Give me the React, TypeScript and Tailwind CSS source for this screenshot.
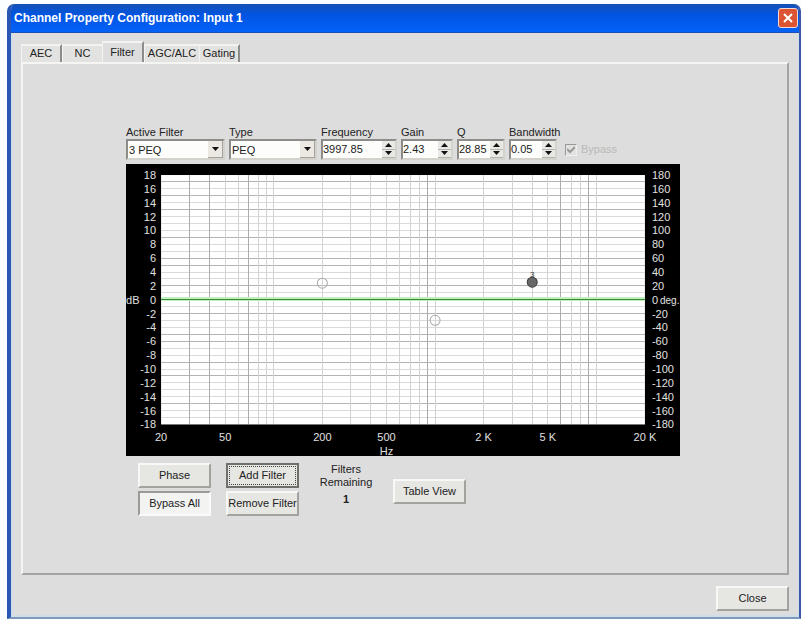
import React, { useState } from "react";

const TABS = ["AEC", "NC", "Filter", "AGC/ALC", "Gating"];

const TAB_WIDTHS: Record<string, string> = {
	AEC: "w-[41px]",
	NC: "w-[40px]",
	Filter: "w-[42px]",
	"AGC/ALC": "w-[55px]",
	Gating: "w-[41px]",
};

// Plot area inside the 553x291 chart
const PLOT = { left: 35, top: 11, right: 518, bottom: 260 };
const MIN_FREQ = 20;
const DECADES = 3;

const freqToX = (freq: number) => PLOT.left + (Math.log10(freq / MIN_FREQ) / DECADES) * (PLOT.right - PLOT.left);
const gainToY = (gain: number) => PLOT.top + ((18 - gain) / 36) * (PLOT.bottom - PLOT.top);

const FREQ_LINES = [
	30, 40, 50, 60, 70, 80, 90, 100, 200, 300, 400, 500, 600, 700, 800, 900, 1000, 2000, 3000, 4000, 5000, 6000, 7000,
	8000, 9000, 10000,
];
const DARK_LINES = [30, 40, 70, 900, 6000, 9000];
const DARK_GAINS = [17, 15, 13, 9, 6, 5, 2, -2, -5, -6, -9, -11, -15];
const GAIN_LINES = Array.from({ length: 35 }, (_, i) => 17 - i);
const AXIS_STEPS = Array.from({ length: 19 }, (_, i) => 18 - i * 2);
const FREQ_LABELS = [
	{ freq: 20, label: "20" },
	{ freq: 50, label: "50" },
	{ freq: 200, label: "200" },
	{ freq: 500, label: "500" },
	{ freq: 2000, label: "2 K" },
	{ freq: 5000, label: "5 K" },
	{ freq: 20000, label: "20 K" },
];

const FilterChart = () => (
	<svg viewBox="0 0 553 291" className="block w-full bg-black" role="img" aria-label="Filter response">
		<rect x={PLOT.left} y={PLOT.top} width={PLOT.right - PLOT.left} height={PLOT.bottom - PLOT.top} fill="#fff" />
		<g shapeRendering="crispEdges">
			{GAIN_LINES.map((gain) => (
				<line
					key={gain}
					x1={PLOT.left}
					x2={PLOT.right}
					y1={gainToY(gain)}
					y2={gainToY(gain)}
					stroke={DARK_GAINS.includes(gain) ? "#b4b4b4" : "#dadada"}
				/>
			))}
			{FREQ_LINES.map((freq) => (
				<line
					key={freq}
					x1={freqToX(freq)}
					x2={freqToX(freq)}
					y1={PLOT.top}
					y2={PLOT.bottom}
					stroke={DARK_LINES.includes(freq) ? "#acacac" : "#d2d2d2"}
				/>
			))}
			<rect x={PLOT.left} y="133" width={PLOT.right - PLOT.left} height="4" fill="#c4f0c0" />
			<rect x={PLOT.left} y="135" width={PLOT.right - PLOT.left} height="1" fill="#37883a" />
		</g>
		<circle cx={freqToX(200)} cy="119" r="5" fill="none" stroke="#a9a9a9" />
		<circle cx={freqToX(1000)} cy="156" r="5" fill="none" stroke="#a9a9a9" />
		<circle cx={freqToX(4000)} cy="118" r="5" fill="#686868" stroke="#3c3c3c" />
		<text x={freqToX(4000)} y="113" fontSize="8" textAnchor="middle" fill="#333">
			3
		</text>
		<g fill="#e0e0e0" fontSize="11">
			{AXIS_STEPS.map((step) => (
				<React.Fragment key={step}>
					<text x="30" y={gainToY(step) + 4} textAnchor="end">
						{step}
					</text>
					<text x="525" y={gainToY(step) + 4}>
						{step === 0 ? "0" : step * 10}
					</text>
				</React.Fragment>
			))}
			<text x="0" y="140">
				dB
			</text>
			<text x="533" y="140" fontSize="10">
				deg.
			</text>
			{FREQ_LABELS.map(({ freq, label }) => (
				<text key={freq} x={freqToX(freq)} y="277" textAnchor="middle">
					{label}
				</text>
			))}
			<text x="260" y="290" textAnchor="middle">
				Hz
			</text>
		</g>
	</svg>
);

const sunken = "border-2 border-t-[#8d8c88] border-l-[#8d8c88] border-r-[#d3d2cd] border-b-[#d3d2cd] bg-[#fdfdfb]";
const raised = "border-2 border-t-[#f8f8f6] border-l-[#f8f8f6] border-r-[#a3a29e] border-b-[#a3a29e] bg-[#e6e6e3]";

const SelectField = ({ id, label, value, width }: { id: string; label: string; value: string; width: string }) => (
	<div className={width}>
		<label htmlFor={id} className="block h-[12px] leading-[12px] whitespace-nowrap">
			{label}
		</label>
		<div className={`relative mt-px h-[21px] ${sunken}`}>
			<select id={id} defaultValue={value} className="block w-full h-full pl-px appearance-none bg-transparent text-[11px] leading-[16px] outline-none">
				<option>{value}</option>
			</select>
			<span className="absolute right-0 top-0 bottom-0 w-[15px] flex items-center justify-center border-r border-b border-[#a3a29e] bg-[#ebe9e2] pointer-events-none">
				<svg width="7" height="4" viewBox="0 0 7 4">
					<path d="M0 0h7L3.5 4z" fill="#111" />
				</svg>
			</span>
		</div>
	</div>
);

const SpinField = ({ id, label, value, width }: { id: string; label: string; value: string; width: string }) => {
	const [text, setText] = useState(value);
	const step = (delta: number) => setText((Number(text) + delta).toFixed(2));

	return (
		<div className={width}>
			<label htmlFor={id} className="block h-[12px] leading-[12px] whitespace-nowrap">
				{label}
			</label>
			<div className={`flex mt-px h-[21px] ${sunken}`}>
				<input
					id={id}
					value={text}
					onChange={(e) => setText(e.target.value)}
					className="min-w-0 flex-1 h-[16px] bg-transparent text-[11px] leading-[16px] outline-none"
				/>
				<span className="w-[13px] flex flex-col bg-[#e8e8e5]">
					<button aria-label={`${label} up`} onClick={() => step(0.01)} className="flex-1 flex items-center justify-center border-b border-[#b5b4b0]">
						<svg width="7" height="4" viewBox="0 0 7 4">
							<path d="M0 4h7L3.5 0z" fill="#111" />
						</svg>
					</button>
					<button aria-label={`${label} down`} onClick={() => step(-0.01)} className="flex-1 flex items-center justify-center border-b border-[#b5b4b0]">
						<svg width="7" height="4" viewBox="0 0 7 4">
							<path d="M0 0h7L3.5 4z" fill="#111" />
						</svg>
					</button>
				</span>
			</div>
		</div>
	);
};

const PushButton = ({ children, className = "" }: { children: React.ReactNode; className?: string }) => (
	<button className={`w-[73px] h-[25px] text-center whitespace-nowrap ${raised} ${className}`}>{children}</button>
);

const App = () => {
	const [activeTab, setActiveTab] = useState("Filter");

	return (
		<div className="min-h-screen flex flex-col bg-[#fbfefe] pt-1 pl-[7px] pb-px font-['Liberation_Sans',Arial,sans-serif] text-[11px] leading-[13px] text-[#222]">
			<div className="flex-1 flex flex-col rounded-t-[7px] overflow-hidden border-l-4 border-r-2 border-b-2 border-l-[#2a56b4] border-r-[#3a59a8] border-b-[#7e99ba] bg-[#dddddd]">
				<header className="-ml-1 -mr-0.5 h-[29px] flex items-center justify-between pl-[7px] pr-[3px] bg-linear-to-b from-[#1451b4] via-[#0054e3] via-40% to-[#0562f8] border-b border-[#1b4fb5]">
					<h1 className="text-[12px] font-bold text-white whitespace-nowrap">Channel Property Configuration: Input 1</h1>
					<button aria-label="Close window" className="w-[20px] h-[20px] flex items-center justify-center rounded-[3px] border border-[#f3d9d5] bg-[#dc5432]">
						<svg width="10" height="10" viewBox="0 0 10 10">
							<path d="M1 1l8 8M9 1l-8 8" stroke="#fff" strokeWidth="2" />
						</svg>
					</button>
				</header>

				<main className="flex-1 flex flex-col pt-2 pl-2 pr-[9px] pb-1 border-l-2 border-r border-b-2 border-[#cfdde8]">
					<div role="tablist" className="flex items-end h-[21px]">
						{TABS.map((tab) => (
							<button
								key={tab}
								role="tab"
								aria-selected={tab === activeTab}
								onClick={() => setActiveTab(tab)}
								className={`${TAB_WIDTHS[tab]} whitespace-nowrap text-center border-t-2 border-l border-[#f3f3f1] ${
									tab === activeTab ? "h-[21px] border-r-2 border-r-[#8c8c8a] bg-[#dddddd]" : "h-[18px] pb-px bg-[#e2e2e0]"
								} ${tab === "AEC" || tab === "Gating" ? "border-r-2 border-r-[#8c8c8a]" : ""}`}>
								{tab}
							</button>
						))}
					</div>

					<section className="flex-1 border-2 border-t-[#f5f5f4] border-l-[#f5f5f4] border-r-[#a4a4a2] border-b-[#a4a4a2] pt-[62px] pr-1 pb-12">
						<div className="mx-auto w-full max-w-[554px]">
							<div className="flex items-end gap-1 mb-1">
								<SelectField id="active-filter" label="Active Filter" value="3 PEQ" width="w-[99px]" />
								<SelectField id="type" label="Type" value="PEQ" width="w-[88px]" />
								<SpinField id="frequency" label="Frequency" value="3997.85" width="w-[76px]" />
								<SpinField id="gain" label="Gain" value="2.43" width="w-[52px]" />
								<SpinField id="q" label="Q" value="28.85" width="w-[48px]" />
								<SpinField id="bandwidth" label="Bandwidth" value="0.05" width="w-[48px]" />
								<label className="flex items-center gap-1 h-[21px] pl-1 text-[#b9b9b7]">
									<span className="relative flex">
										<input type="checkbox" defaultChecked disabled className="appearance-none w-[12px] h-[12px] border border-t-[#999] border-l-[#999] border-[#eee] bg-[#e2e2e0]" />
										<svg width="8" height="8" viewBox="0 0 8 8" className="absolute left-[2px] top-[2px]">
											<path d="M0 3l3 3 5-5" fill="none" stroke="#999" strokeWidth="2" />
										</svg>
									</span>
									Bypass
								</label>
							</div>

							<FilterChart />

							<div className="flex pt-[7px] pl-3">
								<div className="flex flex-col gap-[3px]">
									<PushButton>Phase</PushButton>
									<button
										aria-pressed="true"
										className="w-[73px] h-[25px] text-center whitespace-nowrap border-2 border-t-[#9b9a96] border-l-[#9b9a96] border-r-[#fafafa] border-b-[#fafafa] bg-[#f3f3f2]">
										Bypass All
									</button>
								</div>
								<div className="flex flex-col gap-[3px] ml-[15px]">
									<button className="w-[73px] h-[25px] p-px border-2 border-[#6f6f6c] bg-[#e6e6e3]">
										<span className="flex items-center justify-center h-full border border-dotted border-[#444] whitespace-nowrap">Add Filter</span>
									</button>
									<PushButton>Remove Filter</PushButton>
								</div>
								<div className="w-[94px] text-center">
									<p>
										Filters
										<br />
										Remaining
									</p>
									<p className="mt-1 font-bold">1</p>
								</div>
								<div className="pt-4">
									<PushButton>Table View</PushButton>
								</div>
							</div>
						</div>
					</section>

					<div className="flex justify-end pt-[11px]">
						<PushButton>Close</PushButton>
					</div>
				</main>
			</div>
		</div>
	);
};

export default App;
